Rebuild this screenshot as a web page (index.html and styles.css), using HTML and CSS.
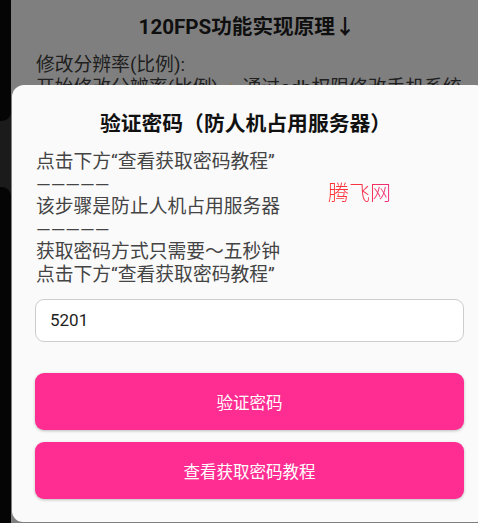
FILE: index.html
```html
<!DOCTYPE html>
<html lang="zh-CN">
<head>
<meta charset="utf-8">
<title>验证密码</title>
<link rel="stylesheet" href="styles.css">
</head>
<body>
<div class="screen">
  <div class="side">
    <div class="side-top"></div>
    <div class="side-mid"></div>
    <div class="side-bottom"></div>
  </div>
  <div class="page">
    <h1 class="page-title">120FPS功能实现原理↓</h1>
    <p class="page-text">修改分辨率(比例):<br>开始修改分辨率(比例)<span class="mark">✍</span>通过adb权限修改手机系统</p>
  </div>
  <div class="dialog">
    <h2 class="dialog-title">验证密码（防人机占用服务器）</h2>
    <p class="dialog-text">点击下方“查看获取密码教程”<br>—————<br>该步骤是防止人机占用服务器<br>—————<br>获取密码方式只需要～五秒钟<br>点击下方“查看获取密码教程”</p>
    <span class="watermark">腾飞网</span>
    <div class="input">5201</div>
    <div class="btn btn-first">验证密码</div>
    <div class="btn">查看获取密码教程</div>
  </div>
</div>
</body>
</html>
```
FILE: styles.css
```css
html, body {
  margin: 0;
  padding: 0;
}
body {
  width: 478px;
  height: 523px;
  overflow: hidden;
  font-family: Roboto, "Noto Sans CJK SC", sans-serif;
}
.screen {
  position: relative;
  width: 478px;
  height: 523px;
  overflow: hidden;
  display: flex;
  background: #7f7f7f;
}
.side {
  width: 11px;
  flex: none;
  display: flex;
  flex-direction: column;
  background: #1b1b1b;
}
.side-top {
  height: 121px;
  background: #050505;
  border-bottom-right-radius: 9px;
}
.side-mid {
  height: 66px;
}
.side-bottom {
  flex: 1;
  background: #050505;
  border-top-right-radius: 9px;
}
.page {
  flex: 1;
  padding: 13px 0 0 25px;
}
.page-title {
  margin: 0;
  padding-right: 20px;
  text-align: center;
  font-size: 20.6px;
  line-height: 28px;
  font-weight: bold;
  color: #0f0f0f;
}
.page-text {
  margin: 13px 0 0;
  font-size: 18.8px;
  line-height: 22.5px;
  color: #202020;
  white-space: nowrap;
}
.mark {
  color: #a07a20;
  font-family: "DejaVu Sans", sans-serif;
  font-size: 15px;
  margin: 0 6px;
}
.dialog {
  position: absolute;
  left: 12px;
  top: 85px;
  width: 475px;
  height: 437px;
  box-sizing: border-box;
  padding: 25px 23px 0;
  background: #fafafa;
  border-radius: 12px 12px 11px 11px;
}
.dialog-title {
  margin: 0;
  text-align: center;
  font-size: 20.8px;
  line-height: 28px;
  font-weight: bold;
  color: #111;
  padding-right: 8px;
}
.dialog-text {
  margin: 13px 0 0;
  padding-left: 1px;
  font-size: 18.8px;
  line-height: 22.5px;
  color: #444;
}
.watermark {
  position: absolute;
  left: 316px;
  top: 95px;
  font-size: 21px;
  line-height: 26px;
  font-weight: 300;
  background: linear-gradient(90deg, #ff3030, #f83348 55%, #ee2c80);
  -webkit-background-clip: text;
  background-clip: text;
  color: transparent;
}
.input {
  margin-top: 13px;
  height: 43px;
  box-sizing: border-box;
  border: 1px solid #cdcdcd;
  border-radius: 9px;
  background: #fff;
  padding-left: 14px;
  font-size: 17px;
  line-height: 41px;
  color: #1e1e1e;
}
.btn {
  margin-top: 12px;
  height: 57px;
  border-radius: 9px;
  background: #ff2c91;
  color: #fff;
  font-size: 16.5px;
  display: flex;
  align-items: center;
  justify-content: center;
  box-shadow: 0 1px 3px rgba(0, 0, 0, 0.25);
}
.btn-first {
  margin-top: 31px;
}
```
